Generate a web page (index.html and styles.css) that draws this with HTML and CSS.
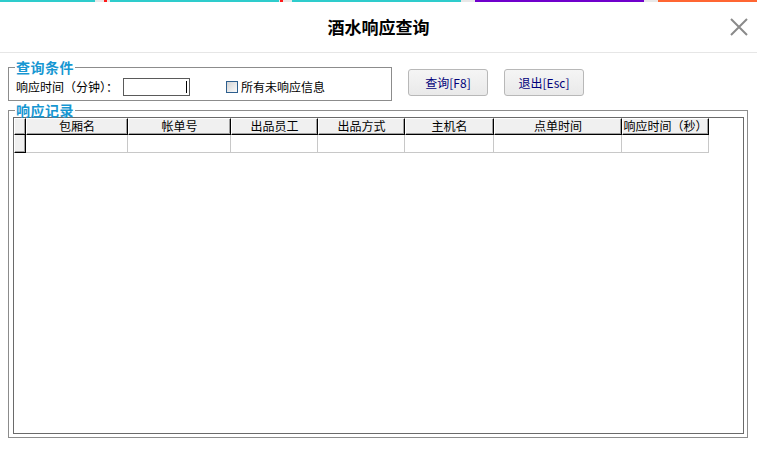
FILE: index.html
```html
<!DOCTYPE html>
<html lang="zh-CN">
<head>
<meta charset="utf-8">
<title>酒水响应查询</title>
<link rel="stylesheet" href="styles.css">
</head>
<body>
<div class="stripe">
  <span class="seg cyan w95"></span><span class="seg gray w9"></span><span class="seg red w3"></span><span class="seg gray w3"></span>
  <span class="seg cyan w169"></span><span class="seg gray w1"></span><span class="seg red w3"></span><span class="seg gray w9"></span>
  <span class="seg cyan w169"></span><span class="seg gray w14"></span>
  <span class="seg purple w169"></span><span class="seg gray w14"></span>
  <span class="seg orange grow"></span>
</div>
<header class="titlebar">
  <h1 class="title">酒水响应查询</h1>
  <svg class="close" viewBox="0 0 18 18" aria-label="关闭"><path d="M1 1 L17 17 M17 1 L1 17" stroke="#8a8a8a" stroke-width="2" fill="none"/></svg>
</header>
<main class="main">
  <div class="row1">
    <fieldset class="group cond">
      <legend class="legend">查询条件</legend>
      <div class="cond-row">
        <span class="label">响应时间（分钟）：</span>
        <div class="input"><span class="caret"></span></div>
        <label class="check"><span class="box"></span><span>所有未响应信息</span></label>
      </div>
    </fieldset>
    <button class="btn">查询[F8]</button>
    <button class="btn">退出[Esc]</button>
  </div>
  <fieldset class="group records">
    <legend class="legend legend-records">响应记录</legend>
    <div class="frame">
      <div class="grid">
        <div class="hc"></div>
        <div class="hc">包厢名</div>
        <div class="hc">帐单号</div>
        <div class="hc">出品员工</div>
        <div class="hc">出品方式</div>
        <div class="hc">主机名</div>
        <div class="hc">点单时间</div>
        <div class="hc">响应时间（秒）</div>
        <div class="dc ind"></div>
        <div class="dc"></div>
        <div class="dc"></div>
        <div class="dc"></div>
        <div class="dc"></div>
        <div class="dc"></div>
        <div class="dc"></div>
        <div class="dc"></div>
      </div>
    </div>
  </fieldset>
</main>
</body>
</html>
```
FILE: styles.css
```css
html, body {
  margin: 0;
  padding: 0;
  background: #fff;
}
body {
  width: 757px;
  height: 449px;
  overflow: hidden;
  font-family: "Noto Sans CJK SC", "Liberation Sans", sans-serif;
  font-size: 12px;
  color: #000;
}
.stripe {
  display: flex;
  height: 2px;
}
.seg { display: block; height: 2px; flex: none; }
.cyan { background: #2ecccc; }
.gray { background: #e8e8e8; }
.red { background: #ff1a1a; }
.purple { background: #7000cc; }
.orange { background: #ff6633; }
.w1 { width: 1px; }
.w3 { width: 3px; }
.w9 { width: 9px; }
.w14 { width: 14px; }
.w95 { width: 95px; }
.w169 { width: 169px; }
.grow { flex: 1; }

.titlebar {
  height: 50px;
  border-bottom: 1px solid #e6e6e6;
  display: grid;
  grid-template-columns: 1fr auto 1fr;
  align-items: center;
}
.title {
  grid-column: 2;
  margin: 0;
  font-size: 17px;
  font-weight: bold;
  line-height: 20px;
  letter-spacing: 0;
}
.close {
  grid-column: 3;
  justify-self: end;
  margin-right: 9px;
  width: 18px;
  height: 18px;
}

.main {
  padding: 7px 0 0 8px;
}
.row1 {
  display: flex;
  align-items: flex-start;
}
.group {
  margin: 0;
  border: 1px solid #8c8c8c;
  box-sizing: border-box;
  min-width: 0;
}
.legend {
  padding: 0 1px;
  margin-left: -1px;
  font-size: 14px;
  font-weight: bold;
  color: #1797d2;
  line-height: 14px;
  letter-spacing: 0.5px;
}
.legend-records {
  margin-left: 2px;
}
.cond {
  width: 384px;
  padding: 4px 0 4px 7px;
}
.cond-row {
  display: flex;
  align-items: center;
  height: 18px;
}
.label {
  width: 107px;
  white-space: nowrap;
  line-height: 16px;
}
.input {
  width: 67px;
  height: 18px;
  box-sizing: border-box;
  border: 1px solid #5a5a5a;
  display: flex;
  justify-content: flex-end;
  align-items: center;
  padding-right: 2px;
}
.caret {
  width: 1px;
  height: 12px;
  background: #000;
}
.check {
  margin-left: 36px;
  display: flex;
  align-items: center;
  gap: 3px;
  line-height: 16px;
}
.box {
  width: 12px;
  height: 12px;
  box-sizing: border-box;
  border: 1px solid #2e5f8e;
  background: linear-gradient(135deg, #d4d4d4, #fbfbfb);
}
.btn {
  margin: 9px 0 0 16px;
  width: 80px;
  height: 27px;
  padding: 0;
  box-sizing: border-box;
  border: 1px solid #b8b8b8;
  border-radius: 3px;
  background: linear-gradient(#f5f5f5, #e9e9e9);
  color: #00007a;
  font-family: "Noto Sans CJK SC", "Liberation Sans", sans-serif;
  font-size: 12px;
  line-height: 16px;
}
.records {
  width: 740px;
  margin-top: 2px;
  padding: 0 3px 3px 4px;
}
.frame {
  height: 317px;
  box-sizing: border-box;
  border: 1px solid #6a6a6a;
  background: #fff;
}
.grid {
  display: grid;
  grid-template-columns: 12px 102px 103px 87px 87px 89px 128px 87px;
  width: max-content;
}
.hc {
  height: 17px;
  box-sizing: border-box;
  background: #f0f0f0;
  border-top: 1px solid #fff;
  border-left: 1px solid #fff;
  border-right: 1px solid #000;
  border-bottom: 1px solid #000;
  box-shadow: inset -1px -1px 0 #a0a0a0;
  text-align: center;
  line-height: 14px;
  white-space: nowrap;
  overflow: hidden;
}
.dc {
  height: 18px;
  box-sizing: border-box;
  background: #fff;
  border-right: 1px solid #c8c8c8;
  border-bottom: 1px solid #c8c8c8;
}
.dc.ind {
  background: #f0f0f0;
  border-left: 1px solid #fff;
  border-right: 1px solid #000;
  border-bottom: 1px solid #000;
  box-shadow: inset -1px -1px 0 #a0a0a0;
}
```
